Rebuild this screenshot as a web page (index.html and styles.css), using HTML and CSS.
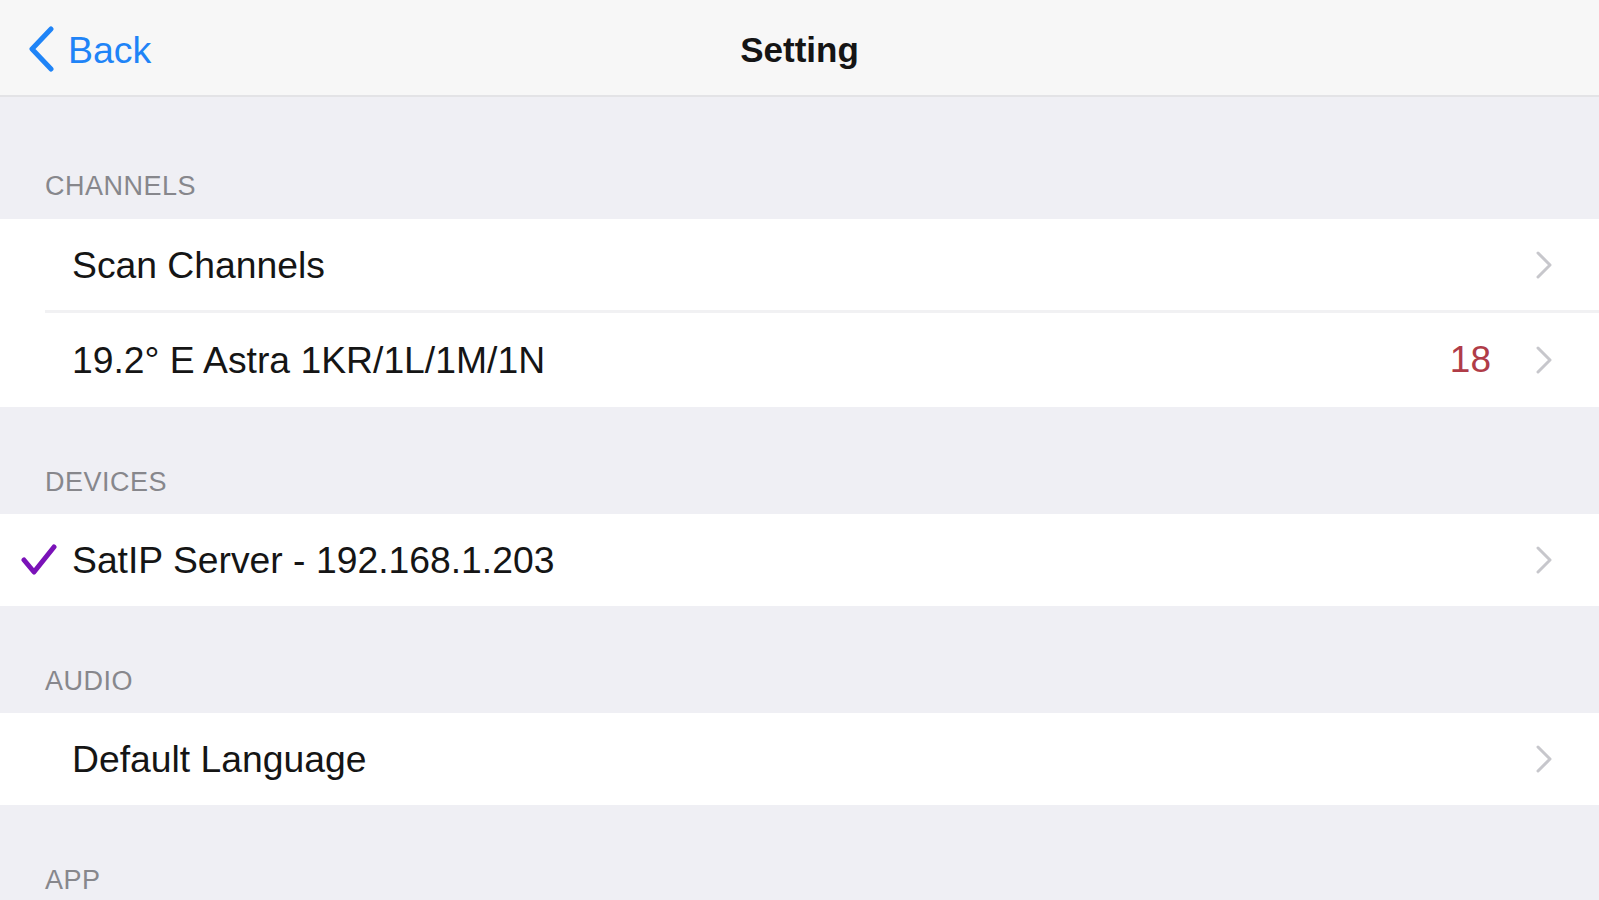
FILE: index.html
```html
<!DOCTYPE html>
<html lang="en">
<head>
<meta charset="utf-8">
<title>Setting</title>
<link rel="stylesheet" href="styles.css">
</head>
<body>
<header class="navbar">
  <a class="back" href="#">
    <svg class="back-icon" width="30" height="46" viewBox="0 0 30 46" aria-hidden="true">
      <path d="M24 3 L5 23 L24 43" fill="none" stroke="currentColor" stroke-width="5" stroke-linecap="round" stroke-linejoin="round"/>
    </svg>
    <span>Back</span>
  </a>
  <h1 class="title">Setting</h1>
  <div class="nav-right"></div>
</header>

<main class="table">
  <section class="section section-first">
    <h2 class="section-header">CHANNELS</h2>
    <ul class="group">
      <li class="cell">
        <span class="lead"></span>
        <span class="label">Scan Channels</span>
        <svg class="chevron" width="18" height="28" viewBox="0 0 18 28" aria-hidden="true"><path d="M3 2 L15 14 L3 26" fill="none" stroke="currentColor" stroke-width="3" stroke-linecap="round" stroke-linejoin="round"/></svg>
      </li>
      <li class="cell">
        <span class="lead"></span>
        <span class="label">19.2° E Astra 1KR/1L/1M/1N</span>
        <span class="detail">18</span>
        <svg class="chevron" width="18" height="28" viewBox="0 0 18 28" aria-hidden="true"><path d="M3 2 L15 14 L3 26" fill="none" stroke="currentColor" stroke-width="3" stroke-linecap="round" stroke-linejoin="round"/></svg>
      </li>
    </ul>
  </section>

  <section class="section">
    <h2 class="section-header">DEVICES</h2>
    <ul class="group">
      <li class="cell">
        <span class="lead">
          <svg class="check" width="38" height="32" viewBox="0 0 38 32" aria-hidden="true"><path d="M4 16 L14 28 L34 3" fill="none" stroke="currentColor" stroke-width="5" stroke-linecap="round" stroke-linejoin="round"/></svg>
        </span>
        <span class="label">SatIP Server - 192.168.1.203</span>
        <svg class="chevron" width="18" height="28" viewBox="0 0 18 28" aria-hidden="true"><path d="M3 2 L15 14 L3 26" fill="none" stroke="currentColor" stroke-width="3" stroke-linecap="round" stroke-linejoin="round"/></svg>
      </li>
    </ul>
  </section>

  <section class="section">
    <h2 class="section-header">AUDIO</h2>
    <ul class="group">
      <li class="cell">
        <span class="lead"></span>
        <span class="label">Default Language</span>
        <svg class="chevron" width="18" height="28" viewBox="0 0 18 28" aria-hidden="true"><path d="M3 2 L15 14 L3 26" fill="none" stroke="currentColor" stroke-width="3" stroke-linecap="round" stroke-linejoin="round"/></svg>
      </li>
    </ul>
  </section>

  <section class="section">
    <h2 class="section-header">APP</h2>
  </section>
</main>
</body>
</html>
```

FILE: styles.css
```css
* {
  box-sizing: border-box;
}

html, body {
  margin: 0;
  padding: 0;
}

body {
  background: #efeff4;
  font-family: "Liberation Sans", Arial, "Helvetica Neue", sans-serif;
  color: #111;
  overflow: hidden;
}

.navbar {
  height: 97px;
  background: #f7f7f7;
  border-bottom: 2px solid #e3e3e6;
  display: grid;
  grid-template-columns: 1fr auto 1fr;
  align-items: center;
}

.back {
  display: flex;
  align-items: center;
  gap: 11px;
  padding-left: 27px;
  color: #1f84f7;
  text-decoration: none;
  font-size: 37.5px;
  line-height: 46px;
}

.back-icon {
  display: block;
  margin-top: 2px;
}

.back span {
  padding-top: 4px;
}

.title {
  margin: 0;
  font-size: 35px;
  font-weight: bold;
  color: #151515;
  line-height: 46px;
  padding-top: 5px;
}

.table {
  display: flex;
  flex-direction: column;
}

.section-header {
  margin: 0;
  padding: 60px 0 17px 45px;
  font-size: 27px;
  line-height: 30px;
  font-weight: normal;
  letter-spacing: 0.5px;
  color: #87878c;
}

.section-first .section-header {
  padding-top: 74px;
  padding-bottom: 18px;
}

.group {
  list-style: none;
  margin: 0;
  padding: 0;
  background: #fff;
}

.cell {
  height: 92px;
  display: flex;
  align-items: center;
  padding-right: 46px;
  position: relative;
}

.cell + .cell {
  height: 96px;
  border-top: 2px solid transparent;
}

.cell + .cell::before {
  content: "";
  position: absolute;
  left: 45px;
  right: 0;
  top: -3px;
  height: 3px;
  background: #f1f1f3;
}

.lead {
  width: 72px;
  flex: none;
  display: flex;
  align-items: center;
  padding-left: 20px;
}

.check {
  display: block;
  color: #7a12b8;
}

.label {
  flex: 1;
  font-size: 37.3px;
  line-height: 44px;
  color: #151515;
}

.detail {
  font-size: 37px;
  line-height: 44px;
  color: #b03c48;
  margin-right: 44px;
}

.chevron {
  display: block;
  flex: none;
  color: #c7c7cc;
}
```
